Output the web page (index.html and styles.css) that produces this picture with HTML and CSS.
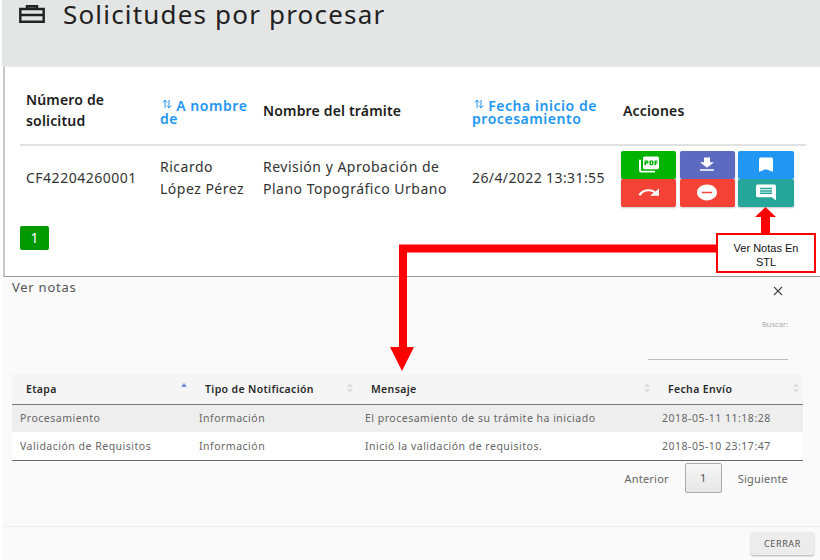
FILE: index.html
```html
<!DOCTYPE html>
<html lang="es">
<head>
<meta charset="utf-8">
<title>Solicitudes por procesar</title>
<link rel="stylesheet" href="styles.css">
</head>
<body>
<div class="page">
  <header class="top">
    <svg class="brief" viewBox="0 0 26 18" width="26" height="18" aria-hidden="true"><path d="M8 4V1.200h10V4M1.300 4h23.400v12.800H1.300zM1.300 10h23.400" fill="none" stroke="#222" stroke-width="2.400"/></svg>
    <h1>Solicitudes por procesar</h1>
  </header>
  <section class="card">
    <table class="req">
      <colgroup><col class="c1"><col class="c2"><col class="c3"><col class="c4"><col class="c5"></colgroup>
      <thead>
        <tr>
          <th>Número de solicitud</th>
          <th class="link"><svg class="updown" viewBox="0 0 10 10" width="10" height="10"><path d="M3 9V2M1 3.500 3 1l2 2.500M7 1v7M5 6.500 7 9l2-2.500" fill="none" stroke="#2196f3" stroke-width="1"/></svg> A nombre de</th>
          <th>Nombre del trámite</th>
          <th class="link"><svg class="updown" viewBox="0 0 10 10" width="10" height="10"><path d="M3 9V2M1 3.500 3 1l2 2.500M7 1v7M5 6.500 7 9l2-2.500" fill="none" stroke="#2196f3" stroke-width="1"/></svg> Fecha inicio de procesamiento</th>
          <th>Acciones</th>
        </tr>
      </thead>
      <tbody>
        <tr>
          <td>CF42204260001</td>
          <td>Ricardo López Pérez</td>
          <td>Revisión y Aprobación de Plano Topográfico Urbano</td>
          <td class="date">26/4/2022 13:31:55</td>
          <td>
            <div class="actions">
              <span class="act green"><svg viewBox="0 0 24 24" preserveAspectRatio="none"><path d="M20 2H8c-1.100 0-2 .9-2 2v12c0 1.100.9 2 2 2h12c1.100 0 2-.9 2-2V4c0-1.100-.9-2-2-2zm-8.500 7.500c0 .83-.67 1.500-1.500 1.500H9v2H7.500V7H10c.83 0 1.500.67 1.500 1.500v1zm5 2c0 .83-.67 1.500-1.500 1.500h-2.500V7H15c.83 0 1.500.67 1.500 1.500v3zm4-3H19v1h1.500V11H19v2h-1.500V7h3v1.500zM9 9.500h1v-1H9v1zM4 6H2v14c0 1.100.9 2 2 2h14v-2H4V6zm10 5.500h1v-3h-1v3z"/></svg></span>
              <span class="act indigo"><svg viewBox="0 0 24 24" preserveAspectRatio="none"><path d="M19 9h-4V3H9v6H5l7 7 7-7zM5 18v2h14v-2H5z"/></svg></span>
              <span class="act blue"><svg viewBox="0 0 24 24" preserveAspectRatio="none"><path d="M17 3H7c-1.100 0-1.990.9-1.990 2L5 21l7-3 7 3V5c0-1.100-.9-2-2-2z"/></svg></span>
              <span class="act red"><svg viewBox="0 0 24 24" preserveAspectRatio="none"><path d="M18.400 10.600C16.550 8.990 14.150 8 11.500 8c-4.650 0-8.580 3.030-9.960 7.220L3.900 16c1.050-3.190 4.050-5.500 7.600-5.500 1.950 0 3.730.72 5.120 1.880L13 16h9V7l-3.600 3.600z"/></svg></span>
              <span class="act red"><svg viewBox="0 0 24 24" preserveAspectRatio="none"><path d="M12 2C6.480 2 2 6.480 2 12s4.480 10 10 10 10-4.480 10-10S17.520 2 12 2zm5 11H7v-2h10v2z"/></svg></span>
              <span class="act teal"><svg class="flip" viewBox="0 0 24 24" preserveAspectRatio="none"><path d="M20 2H4c-1.100 0-1.990.9-1.990 2L2 22l4-4h14c1.100 0 2-.9 2-2V4c0-1.100-.9-2-2-2zm-2 12H6v-2h12v2zm0-3H6V9h12v2zm0-3H6V6h12v2z"/></svg></span>
            </div>
          </td>
        </tr>
      </tbody>
    </table>
    <span class="page-one">1</span>
  </section>
  <section class="modal">
    <div class="modal-head">
      <span class="modal-title">Ver notas</span>
      <svg class="close" viewBox="0 0 10 10" width="10" height="10"><path d="M1 1l8 8M9 1l-8 8" stroke="#444" stroke-width="1.100" fill="none"/></svg>
    </div>
    <div class="search">
      <label>Buscar:</label>
      <span class="search-line"></span>
    </div>
    <table class="notes">
      <colgroup><col class="n1"><col class="n2"><col class="n3"><col class="n4"></colgroup>
      <thead>
        <tr>
          <th>Etapa<span class="sort asc"></span></th>
          <th>Tipo de Notificación<span class="sort"></span></th>
          <th>Mensaje<span class="sort"></span></th>
          <th>Fecha Envío<span class="sort"></span></th>
        </tr>
      </thead>
      <tbody>
        <tr class="odd">
          <td>Procesamiento</td><td>Información</td><td>El procesamiento de su trámite ha iniciado</td><td>2018-05-11 11:18:28</td>
        </tr>
        <tr>
          <td>Validación de Requisitos</td><td>Información</td><td>Inició la validación de requisitos.</td><td>2018-05-10 23:17:47</td>
        </tr>
      </tbody>
    </table>
    <nav class="pager"><span>Anterior</span><span class="pager-cur">1</span><span>Siguiente</span></nav>
    <footer class="modal-foot"><button class="close-btn" type="button">CERRAR</button></footer>
  </section>
  <svg class="annot" viewBox="0 0 820 560" width="820" height="560" aria-hidden="true">
    <path d="M716 248.500H403V348" fill="none" stroke="#f00" stroke-width="8"/>
    <path d="M390 347h24l-12 24z" fill="#f00"/>
    <path d="M761 234v-17h-6l10.500-10 10.500 10h-6v17z" fill="#f00"/>
  </svg>
  <div class="callout">Ver Notas En<br>STL</div>
</div>
</body>
</html>
```
FILE: styles.css
```css
* { box-sizing: border-box; }
html, body { margin: 0; padding: 0; }
body { width: 820px; height: 560px; overflow: hidden; background: #fff; font-family: "Noto Sans", "Open Sans", sans-serif; color: #333; }
.page { position: relative; width: 820px; height: 560px; }
.top { height: 66px; margin-left: 2px; background: #e4e6e6; display: flex; align-items: flex-start; padding: 0 0 0 17px; gap: 18px; }
.brief { margin-top: 5px; }
.top h1 { margin: 0; font-size: 26px; line-height: 28px; font-weight: 400; color: #222; letter-spacing: 1.180px; }
.card { height: 211px; margin-left: 3px; padding: 14px 14px 0 15px; background: #fff; border-left: 2px solid #c9c9c9; border-bottom: 1px solid #999; border-top: 1px solid #e9e9e9; }
.req { width: 786px; border-collapse: collapse; table-layout: fixed; font-size: 14px; }
.c1 { width: 134px; } .c2 { width: 103px; } .c3 { width: 209px; } .c4 { width: 151px; } .c5 { width: 189px; }
.req th { height: 64px; padding: 0 6px 5px; text-align: left; font-weight: 600; line-height: 21px; letter-spacing: 0.17px; color: #1c1c1c; border-bottom: 2px solid #e2e2e2; }
.req th.link { padding-bottom: 1px; line-height: 13.500px; letter-spacing: 0.550px; color: #2196f3; }
.updown { margin-left: 2px; vertical-align: 2px; }
.req td { padding: 0 6px 2px; line-height: 22px; color: #333; letter-spacing: 0.500px; vertical-align: middle; height: 67px; }
.req td.date { letter-spacing: 0.400px; }
.actions { display: grid; grid-template-columns: 55px 55px 56px; grid-auto-rows: 28px; column-gap: 3.500px; margin: 1px 0 0 -2px; }
.act { display: flex; align-items: center; justify-content: center; border-radius: 2px; box-shadow: 0 1px 2px rgba(0,0,0,.22); }
.act svg { width: 24px; height: 19px; fill: #fff; }
.act .flip { transform: scaleX(-1); }
.green { background: #00b300; } .indigo { background: #5c6bc0; } .blue { background: #2196f3; } .red { background: #f44336; } .teal { background: #26a69a; }
.page-one { display: block; width: 29px; height: 24px; margin-top: 14px; background: #009900; color: #fff; border-radius: 2px; text-align: center; font-size: 14px; line-height: 24px; }
.modal { height: 283px; margin-left: 3px; background: #fafafa; position: relative; }
.modal-head { display: flex; justify-content: space-between; height: 39px; padding: 1px 37px 0 9px; }
.modal-title { font-size: 13px; line-height: 18px; color: #555; letter-spacing: 0.750px; }
.close { margin-top: 8px; }
.search { display: flex; flex-direction: column; align-items: flex-end; width: 785px; height: 58px; }
.search label { font-size: 7.500px; line-height: 16px; color: #aaa; }
.search-line { width: 140px; height: 1px; margin-top: 27px; background: #bdbdbd; }
.notes { width: 791px; margin-left: 9px; border-collapse: collapse; table-layout: fixed; font-size: 10.500px; letter-spacing: 0.350px; }
.n1 { width: 179px; } .n2 { width: 166px; } .n3 { width: 297px; } .n4 { width: 149px; }
.notes th { position: relative; height: 30px; padding: 0 14px; text-align: left; font-weight: 600; color: #2a2a2a; background: #f5f5f5; border-bottom: 1px solid #777; }
.notes td { height: 28px; padding: 0 8px; letter-spacing: 0.500px; color: #666; background: #fff; }
.notes .odd td { background: #eeeeee; }
.notes tbody tr:last-child td { border-bottom: 1px solid #666; }
.sort { position: absolute; right: 4px; top: 9px; width: 0; height: 0; border: 3px solid transparent; border-bottom: 4px solid #ddd; border-top: 0; }
.sort::after { content: ""; position: absolute; left: -3px; top: 6px; border: 3px solid transparent; border-top: 4px solid #ddd; border-bottom: 0; }
.sort.asc { border-bottom-color: #7b86e0; }
.sort.asc::after { display: none; }
.pager { display: flex; align-items: center; justify-content: flex-end; width: 785px; height: 31px; margin-top: 2px; font-size: 11px; letter-spacing: 0.200px; color: #666; }
.pager-cur { width: 37px; height: 30px; margin: 0 16px; border: 1px solid #aaa; border-radius: 2px; background: linear-gradient(#f6f6f6, #e6e6e6); text-align: center; line-height: 28px; color: #555; }
.modal-foot { position: absolute; left: 0; right: 0; top: 249px; height: 34px; border-top: 1px solid #eeeeee; display: flex; justify-content: flex-end; padding: 5px 6px 0 0; }
.close-btn { width: 63px; height: 23px; padding: 0; border: 0; border-radius: 2px; background: #ececec; box-shadow: 0 1px 2px rgba(0,0,0,.3); font: 9px "Noto Sans", sans-serif; letter-spacing: 0.600px; color: #555; }
.annot { position: absolute; left: 0; top: 0; pointer-events: none; }
.callout { position: absolute; left: 716px; top: 233px; width: 100px; height: 40px; border: 2px solid #f00; background: #fff; color: #111; font-family: "Liberation Sans", sans-serif; font-size: 11px; line-height: 14px; text-align: center; padding-top: 6px; }
```
